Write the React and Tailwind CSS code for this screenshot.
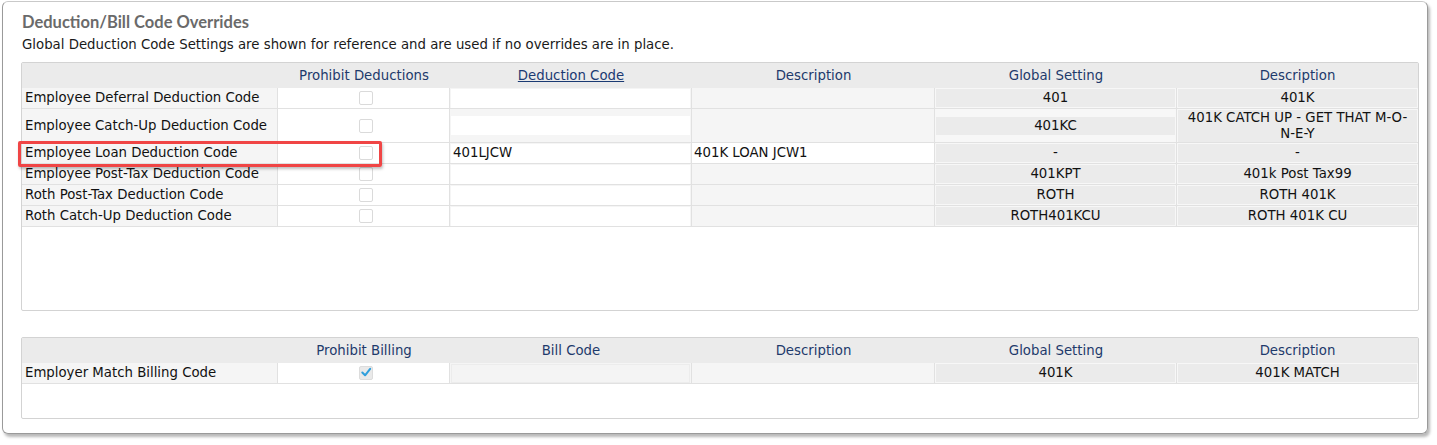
import React from 'react';

const font = { fontFamily: '"DejaVu Sans", Verdana, sans-serif' };

const dedRows = [
  { label: 'Employee Deferral Deduction Code', code: '', desc: '', global: '401', gdesc: '401K' },
  { label: 'Employee Catch-Up Deduction Code', code: '', desc: '', global: '401KC', gdesc: ['401K CATCH UP - GET THAT M-O-', 'N-E-Y'], tall: true },
  { label: 'Employee Loan Deduction Code', code: '401LJCW', desc: '401K LOAN JCW1', global: '-', gdesc: '-' },
  { label: 'Employee Post-Tax Deduction Code', code: '', desc: '', global: '401KPT', gdesc: '401k Post Tax99' },
  { label: 'Roth Post-Tax Deduction Code', code: '', desc: '', global: 'ROTH', gdesc: 'ROTH 401K' },
  { label: 'Roth Catch-Up Deduction Code', code: '', desc: '', global: 'ROTH401KCU', gdesc: 'ROTH 401K CU' },
];

const cols = 'grid grid-cols-[256px_172px_242px_243px_242px_241px]';

function Checkbox({ checked }) {
  if (checked) {
    return (
      <div className="ml-[5px] w-[14px] h-[14px] bg-[#e9e9e9] border border-[#dcdcdc] rounded-[2px] flex items-center justify-center">
        <svg width="13" height="13" viewBox="0 0 13 13" className="-mt-[2px]">
          <path d="M2.5 6.5 L5.5 9.5 L11 2.5" fill="none" stroke="#2f9fdc" strokeWidth="2.2" strokeLinecap="round" strokeLinejoin="round" />
        </svg>
      </div>
    );
  }
  return <div className="ml-[5px] w-[14px] h-[14px] bg-white border border-[#dadada] rounded-[2px]" />;
}

function HeaderRow({ labels }) {
  return (
    <div className={`${cols} h-[25px] bg-[#ebebeb] text-[#1e3a6b] items-center`}>
      <div />
      {labels.map((l, i) => (
        <div key={i} className="text-center">
          {l.link ? <span className="underline text-[#1b3a73]">{l.text}</span> : l.text}
        </div>
      ))}
    </div>
  );
}

function DataRow({ r, checked, disabledCode }) {
  const h = r.tall ? 'h-[34px]' : 'h-[21px]';
  const filled = r.code !== '';
  return (
    <div className={`${cols} ${h} border-b border-[#e1e1e1] text-[#111]`}>
      <div className="bg-[#f5f5f5] border-r border-[#e1e1e1] pl-[3px] flex items-center whitespace-nowrap">{r.label}</div>
      <div className="bg-white border-r border-[#e1e1e1] flex items-center justify-center">
        <Checkbox checked={checked} />
      </div>
      <div className="bg-[#f5f5f5] border-r border-[#e1e1e1] flex items-center px-px">
        <div className={`w-full h-[19px] flex items-center pl-[2px] ${disabledCode ? 'bg-[#f4f4f4] border border-[#ececec]' : 'bg-white'}`}>{r.code}</div>
      </div>
      <div className={`${filled ? 'bg-white' : 'bg-[#f5f5f5]'} border-r border-[#e1e1e1] flex items-center pl-[2px]`}>{r.desc}</div>
      <div className="bg-[#f7f7f7] border-r border-[#e1e1e1] flex items-center px-px">
        <div className="w-full h-[18px] bg-[#ebebeb] flex items-center justify-center">{r.global}</div>
      </div>
      <div className="bg-[#f7f7f7] flex items-center px-px">
        {Array.isArray(r.gdesc) ? (
          <div className="w-full h-[32px] leading-[16px] bg-[#ebebeb] flex flex-col items-center justify-center text-center whitespace-nowrap">
            {r.gdesc.map((t) => (
              <span key={t}>{t}</span>
            ))}
          </div>
        ) : (
          <div className="w-full h-[18px] bg-[#ebebeb] flex items-center justify-center">{r.gdesc}</div>
        )}
      </div>
    </div>
  );
}

export default function App() {
  return (
    <div className="w-[1437px] h-[445px] bg-white pt-px pl-[2px] text-[13.3px]" style={font}>
      <div className="relative w-[1426px] h-[433px] border border-[#9a9a9a] border-t-[#c9c9c9] rounded-[6px] shadow-[2px_3px_3px_rgba(0,0,0,0.28)] pl-[18px] pt-[9px]">
        <h2 className="text-[16.5px] font-bold text-[#6a6a6a] leading-[22px] pl-[1px]" style={{ fontFamily: 'Lato, "Open Sans", sans-serif' }}>
          Deduction/Bill Code Overrides
        </h2>
        <p className="text-[#1a1a1a] mt-[3px] leading-[18px] pl-[1px]">
          Global Deduction Code Settings are shown for reference and are used if no overrides are in place.
        </p>

        <div className="mt-[8px] w-[1398px] h-[249px] border border-[#d3d3d3] rounded-[2px]">
          <HeaderRow
            labels={[
              { text: 'Prohibit Deductions' },
              { text: 'Deduction Code', link: true },
              { text: 'Description' },
              { text: 'Global Setting' },
              { text: 'Description' },
            ]}
          />
          {dedRows.map((r) => (
            <DataRow key={r.label} r={r} />
          ))}
        </div>

        <div className="mt-[26px] w-[1398px] h-[82px] border border-[#d3d3d3] rounded-[2px]">
          <HeaderRow
            labels={[
              { text: 'Prohibit Billing' },
              { text: 'Bill Code' },
              { text: 'Description' },
              { text: 'Global Setting' },
              { text: 'Description' },
            ]}
          />
          <DataRow
            r={{ label: 'Employer Match Billing Code', code: '', desc: '', global: '401K', gdesc: '401K MATCH' }}
            checked
            disabledCode
          />
        </div>

        {/* highlight annotation */}
        <div className="absolute left-[15px] top-[139px] w-[364px] h-[26px] border-[3px] border-[#f04545] rounded-[2px] shadow-[1px_2px_3px_rgba(0,0,0,0.25)]" />
      </div>
    </div>
  );
}
